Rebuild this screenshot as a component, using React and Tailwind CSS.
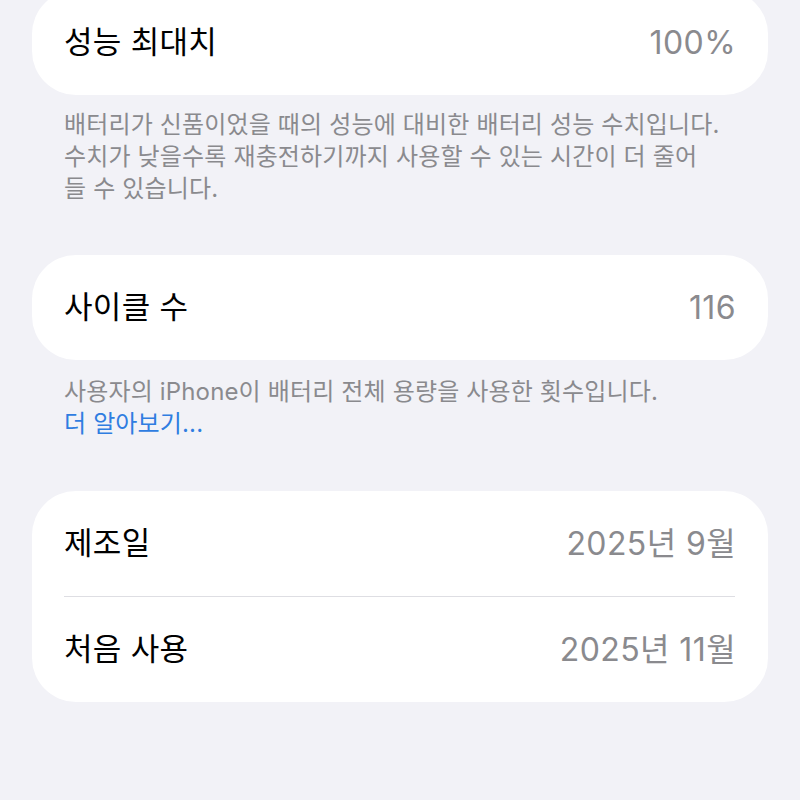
import React from 'react';

const font = { fontFamily: '"Inter", "Noto Sans CJK KR", sans-serif' };

function Row({ label, value }) {
  return (
    <div className="h-[105px] flex items-center justify-between px-8">
      <span className="text-[31px] text-black tracking-[0.3px]">{label}</span>
      <span className="text-[32px] text-[#8a8a8e] tracking-[0.4px]">{value}</span>
    </div>
  );
}

function Card({ children, className = '' }) {
  return <div className={`bg-white rounded-[44px] overflow-hidden ${className}`}>{children}</div>;
}

function Note({ children, className = '' }) {
  return (
    <div className={`px-8 text-[24px] leading-[32px] tracking-[0.15px] text-[#8a8a8e] ${className}`}>
      {children}
    </div>
  );
}

export default function App() {
  return (
    <div className="w-[800px] h-[800px] bg-[#f2f2f7] overflow-hidden px-8" style={font}>
      <Card className="mt-[-10px]">
        <Row label="성능 최대치" value="100%" />
      </Card>
      <Note className="mt-[14px]">
        배터리가 신품이었을 때의 성능에 대비한 배터리 성능 수치입니다.
        <br />
        수치가 낮을수록 재충전하기까지 사용할 수 있는 시간이 더 줄어
        <br />
        들 수 있습니다.
      </Note>

      <Card className="mt-[50px]">
        <Row label="사이클 수" value="116" />
      </Card>
      <Note className="mt-[16px]">
        사용자의 iPhone이 배터리 전체 용량을 사용한 횟수입니다.
        <br />
        <span className="text-[#2f7de1]">더 알아보기...</span>
      </Note>

      <Card className="mt-[51px]">
        <Row label="제조일" value="2025년 9월" />
        <div className="ml-8 mr-[33px] h-px bg-[#dedee3]" />
        <Row label="처음 사용" value="2025년 11월" />
      </Card>
    </div>
  );
}
